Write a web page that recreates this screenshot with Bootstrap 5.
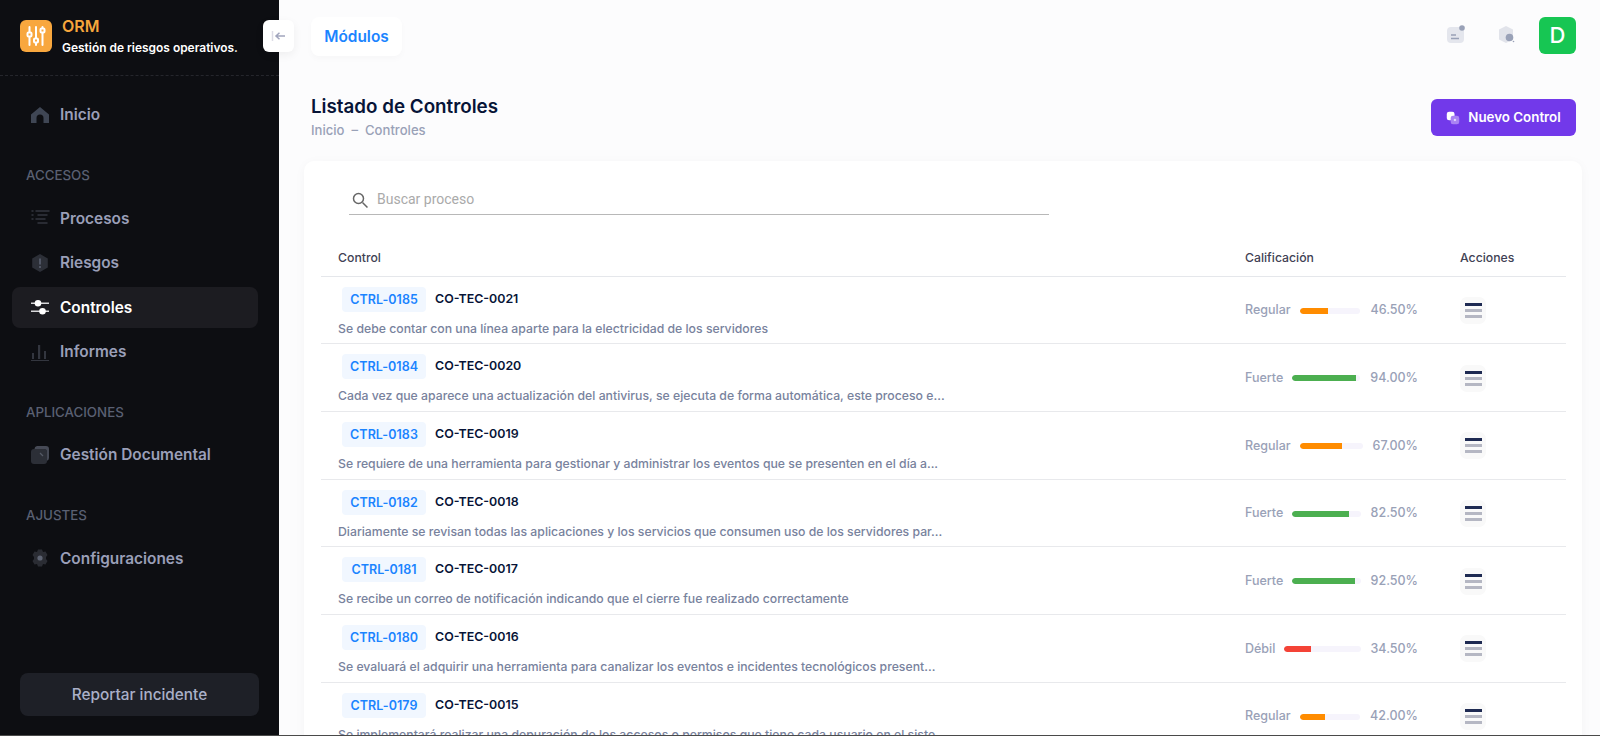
<!DOCTYPE html>
<html lang="es">
<head>
<meta charset="utf-8">
<title>Listado de Controles</title>
<link href="https://cdn.jsdelivr.net/npm/bootstrap@5.3.0/dist/css/bootstrap.min.css" rel="stylesheet">
<style>
html,body{height:736px;overflow:hidden}
body{font-family:Inter,"Liberation Sans",sans-serif;background:#fcfcfd;color:#071437}
.shell{height:735px;overflow:hidden}
.frame-line{height:1px;background:#4a4a4a}
.side{width:279px;flex:none;background:#0d0e12;height:735px}
.brand{height:76px;border-bottom:1px dashed #25262c;padding:20px 20px 0;gap:10px}
.logo-box{width:32px;height:32px;border-radius:6px;background:#f8a73e;flex:none}
.brand-name{font-size:16px;font-weight:600;color:#f6a63c;line-height:18px;margin-top:-3px}
.brand-sub{font-size:11.95px;font-weight:600;color:#fff;line-height:16px;margin-top:5px;white-space:nowrap}
.side-nav{padding:0 21px 0 12px;flex:1}
.nav-entry{height:41px;display:flex;align-items:center;gap:10px;padding-left:18px;font-size:15.4px;font-weight:600;color:#9a9fb8;border-radius:8px;margin-bottom:3.4px;text-decoration:none}
.nav-entry svg{width:20px;height:20px;flex:none}
.nav-entry.on{background:#1c1c21;color:#fff}
.nav-head{font-size:13.3px;font-weight:500;color:#5a6072;padding-left:14px;line-height:16px}
.first-entry{margin-top:18px}
.gap-accesos{margin-top:29px}
.gap-apps{margin-top:28.5px}
.gap-ajustes{margin-top:28.5px}
.after-head{margin-top:14.5px}
.report-wrap{padding:0 20px 19px}
.report-btn{width:239px;height:43px;background:#1e2027;color:#aab0c8;font-size:15.35px;font-weight:500;border:0;border-radius:8px}
.collapse-btn{position:absolute;left:263px;top:20px;width:31px;height:32px;background:#fff;border-radius:6px;box-shadow:0 3px 10px rgba(0,0,0,.06);z-index:5}
.main-col{min-width:0}
.topbar{height:70px;padding:17px 24px 0 32px}
.mod-box{width:91px;height:39px;background:#fff;border-radius:8px;box-shadow:0 3px 6px rgba(0,0,0,.025);color:#1b84ff;font-size:15.4px;font-weight:600}
.top-ico{width:20px;height:20px;margin-top:7px}
.ico-a{margin-right:32px}
.ico-b{margin-right:22px}
.avatar{width:37px;height:37px;border-radius:6px;background:#17c653;color:#fff;font-size:22px;font-weight:500}
.head-row{padding:25px 24px 0 32px;height:91px}
.page-title{font-size:18.8px;font-weight:600;color:#071437;line-height:24px;margin:0}
.crumbs{font-size:13.1px;font-weight:500;color:#99a1b7;line-height:16px;margin-top:3px}
.new-btn{width:145px;height:37px;background:#7239ea;color:#fff;font-size:13.35px;font-weight:600;border:0;border-radius:6px;margin-top:4px}
.panel{margin:0 18px 0 25px;background:#fff;border-radius:10px;box-shadow:0 2px 12px rgba(0,0,0,.035);padding:23px 16px 0 17px;height:640px}
.search-box{width:700px;margin-left:28px;height:31px;border-bottom:1px solid #b8b8b8;padding:0 2px 0;align-items:flex-start}
.search-box input{border:0;outline:0;background:none;font-size:14px;line-height:18px;height:18px;padding:0;flex:1;font-family:Roboto,sans-serif;color:#555;margin-top:6px}
.search-box input::placeholder{color:#aaa}
.search-box svg{margin-top:7px}
.ctable{width:1245px;table-layout:fixed;border-collapse:collapse;margin-top:26px}
.ctable th{font-size:12.25px;font-weight:500;color:#3f4254;padding:0 0 0 17px;height:35px;border-bottom:1px solid #e5e7eb;vertical-align:middle}
.ctable td{padding:0 0 0 17px;height:67.7px;border-bottom:1px solid #e8e9ec;vertical-align:top}
.code-chip{display:inline-block;height:25px;line-height:25px;width:84px;text-align:center;margin-left:4px;margin-top:10px;border-radius:4px;background:#f1f7ff;color:#1b84ff;font-size:12.5px;font-weight:600;letter-spacing:.05px}
.code-ref{font-size:12.4px;font-weight:600;color:#071437;margin-left:9px;vertical-align:1px}
.ctl-desc{font-size:12.25px;font-weight:500;color:#78829d;line-height:16px;margin-top:9px;white-space:nowrap;overflow:hidden}
.score{width:173px;height:66px;padding-top:2px;font-size:12.5px;color:#99a1b7;font-weight:500}
.score-bar{flex:1;height:6px;background:#f6f4fc;border-radius:3px;margin:0 10px 0 9px;overflow:hidden}
.score-bar span{display:block;height:100%;border-radius:3px 0 0 3px}
.act-wrap{height:66px;padding-top:2px}
.act-btn{width:26px;height:27px;border-radius:7px;background:#f9f9f9}
.act-btn i{display:block;width:17px;height:3px;margin-bottom:3px}
.act-btn i:last-child{margin-bottom:0}
</style>
</head>
<body>
<div class="shell d-flex">
  <aside class="side d-flex flex-column">
    <div class="brand d-flex">
      <div class="logo-box d-flex align-items-center justify-content-center">
        <svg width="24" height="24" viewBox="0 0 24 24" fill="none" stroke="#fff" stroke-width="2" stroke-linecap="round">
          <path d="M5.5 3v5M5.5 13v8M12 3v11M12 19v2M18.500 3v1M18.500 9v12"/>
          <rect x="3.500" y="8.500" width="4" height="4" rx="1"/><rect x="10" y="14.500" width="4" height="4" rx="1"/><rect x="16.500" y="4.500" width="4" height="4" rx="1"/>
        </svg>
      </div>
      <div>
        <div class="brand-name">ORM</div>
        <div class="brand-sub">Gestión de riesgos operativos.</div>
      </div>
    </div>
    <div class="side-nav d-flex flex-column">
      <a class="nav-entry first-entry" href="#"><svg viewBox="0 0 20 20"><path fill="#3f4654" d="M1 9.500 10 2l9 7.500V18h-5.500v-5a3.500 3.500 0 0 0-7 0v5H1z"/></svg>Inicio</a>
      <div class="nav-head gap-accesos">ACCESOS</div>
      <a class="nav-entry after-head" href="#"><svg viewBox="0 0 20 20" fill="none" stroke="#33363f" stroke-width="1.500" stroke-linecap="round"><path d="M6 3h13M8 7h9M6 11h9M8 15h9M2 3h1M2 7h1M2 11h1"/></svg>Procesos</a>
      <a class="nav-entry" href="#"><svg viewBox="0 0 20 20"><path fill="#2c2f37" d="M10 1l7.800 4.500v9L10 19l-7.800-4.500v-9z"/><path fill="#5a6070" d="M9.200 5.500h1.600v6H9.200zM9.200 13h1.600v2H9.200z"/></svg>Riesgos</a>
      <a class="nav-entry on" href="#"><svg viewBox="0 0 20 20" fill="#fff"><path d="M1 5.500h18v1.600H1zM1 13.500h18v1.600H1z" fill="#d8d8da"/><circle cx="8" cy="6.300" r="3.300"/><circle cx="12.500" cy="14.300" r="3.300"/></svg>Controles</a>
      <a class="nav-entry" href="#"><svg viewBox="0 0 20 20" fill="#33363f"><rect x="2" y="11" width="2" height="6"/><rect x="8" y="3" width="2.200" height="14"/><rect x="14" y="9" width="2" height="8"/><rect x="1" y="18" width="18" height="1"/></svg>Informes</a>
      <div class="nav-head gap-apps">APLICACIONES</div>
      <a class="nav-entry after-head" href="#"><svg viewBox="0 0 20 20"><path fill="#2c2f37" d="M4 4h10a3 3 0 0 1 3 3v9a3 3 0 0 1-3 3H4a3 3 0 0 1-3-3V7a3 3 0 0 1 3-3z"/><path fill="#464a56" d="M7 1h9a3 3 0 0 1 3 3v9a3 3 0 0 1-2 2.800V7a3 3 0 0 0-3-3H4.500A3 3 0 0 1 7 1z"/><path d="M10 8l3 3" stroke="#555a66" stroke-width="1.300"/></svg>Gestión Documental</a>
      <div class="nav-head gap-ajustes">AJUSTES</div>
      <a class="nav-entry after-head" href="#"><svg viewBox="0 0 20 20"><path fill="#2a2c33" d="M8 1.500h4l1 2.500 2.500-.5 2 3.500L16 9v2l1.500 2-2 3.500L13 16l-1 2.500H8L7 16l-2.500.5-2-3.500L4 11V9L2.500 7l2-3.500L7 4z"/><circle cx="10" cy="10" r="2.600" fill="#5e6473"/></svg>Configuraciones</a>
    </div>
    <div class="report-wrap"><button class="report-btn btn" type="button">Reportar incidente</button></div>
  </aside>
  <div class="collapse-btn d-flex align-items-center justify-content-center">
    <svg width="16" height="12" viewBox="0 0 16 12" fill="none" stroke="#a1a5bd"><path d="M1.500 1v10" stroke="#dcdce6" stroke-width="1.500"/><path d="M14 6H5M8.500 2.800 5 6l3.500 3.200" stroke-width="1.500"/></svg>
  </div>
  <div class="main-col flex-grow-1">
    <div class="topbar d-flex justify-content-between">
      <div class="mod-box d-flex align-items-center justify-content-center">Módulos</div>
      <div class="d-flex align-items-start">
        <div class="top-ico ico-a"><svg class="d-block" width="20" height="20" viewBox="0 0 20 20"><rect x="2" y="3" width="17" height="16" rx="4" fill="#e4e6ed"/><path d="M6 11h5M6 14.500h8" stroke="#99a1b7" stroke-width="1.300"/><circle cx="17" cy="4" r="2.800" fill="#99a1b7"/></svg></div>
        <div class="top-ico ico-b"><svg class="d-block" width="20" height="20" viewBox="0 0 20 20"><path fill="#e1e3ea" d="M9 2l7 3.500v10L9 19l-7-3.500v-10z"/><circle cx="12.500" cy="13.500" r="3.800" fill="#99a1b7"/><circle cx="16.500" cy="17.500" r=".8" fill="#99a1b7"/></svg></div>
        <div class="avatar d-flex align-items-center justify-content-center">D</div>
      </div>
    </div>
    <div class="head-row d-flex justify-content-between align-items-start">
      <div>
        <h1 class="page-title">Listado de Controles</h1>
        <div class="crumbs">Inicio&nbsp; –&nbsp; Controles</div>
      </div>
      <button class="new-btn btn d-flex align-items-center justify-content-center gap-2 p-0" type="button">
        <svg width="14" height="14" viewBox="0 0 18 18"><rect x="1" y="1" width="10" height="11" rx="3" fill="#fff"/><rect x="6" y="6" width="11" height="11" rx="3" fill="#a983f3"/><path d="M10 11.500h3M11.500 10v3" stroke="#fff"/></svg>
        Nuevo Control
      </button>
    </div>
    <div class="panel">
      <div class="search-box d-flex gap-2">
        <svg width="18" height="18" viewBox="0 0 18 18" fill="none" stroke="#666" stroke-width="1.500"><circle cx="7.500" cy="7.500" r="5"/><path d="m11.500 11.500 5 5"/></svg>
        <input type="text" placeholder="Buscar proceso">
      </div>
      <table class="ctable">
        <colgroup><col style="width:907px"><col style="width:215px"><col style="width:123px"></colgroup>
        <thead><tr><th>Control</th><th>Calificación</th><th>Acciones</th></tr></thead>
        <tbody>
          <tr><td><span class="code-chip">CTRL-0185</span><span class="code-ref">CO-TEC-0021</span><div class="ctl-desc">Se debe contar con una línea aparte para la electricidad de los servidores</div></td><td><div class="score d-flex align-items-center"><span>Regular</span><div class="score-bar"><span style="width:46.5%;background:#ff8c00"></span></div><span>46.50%</span></div></td><td><div class="act-wrap d-flex align-items-center"><div class="act-btn d-flex flex-column align-items-center justify-content-center"><i style="background:#1e2a52"></i><i style="background:#b5b7c3"></i><i style="background:#b5b7c3"></i></div></div></td></tr>
          <tr><td><span class="code-chip">CTRL-0184</span><span class="code-ref">CO-TEC-0020</span><div class="ctl-desc">Cada vez que aparece una actualización del antivirus, se ejecuta de forma automática, este proceso e...</div></td><td><div class="score d-flex align-items-center"><span>Fuerte</span><div class="score-bar"><span style="width:94%;background:#4caf50"></span></div><span>94.00%</span></div></td><td><div class="act-wrap d-flex align-items-center"><div class="act-btn d-flex flex-column align-items-center justify-content-center"><i style="background:#1e2a52"></i><i style="background:#b5b7c3"></i><i style="background:#b5b7c3"></i></div></div></td></tr>
          <tr><td><span class="code-chip">CTRL-0183</span><span class="code-ref">CO-TEC-0019</span><div class="ctl-desc">Se requiere de una herramienta para gestionar y administrar los eventos que se presenten en el día a...</div></td><td><div class="score d-flex align-items-center"><span>Regular</span><div class="score-bar"><span style="width:67%;background:#ff8c00"></span></div><span>67.00%</span></div></td><td><div class="act-wrap d-flex align-items-center"><div class="act-btn d-flex flex-column align-items-center justify-content-center"><i style="background:#1e2a52"></i><i style="background:#b5b7c3"></i><i style="background:#b5b7c3"></i></div></div></td></tr>
          <tr><td><span class="code-chip">CTRL-0182</span><span class="code-ref">CO-TEC-0018</span><div class="ctl-desc">Diariamente se revisan todas las aplicaciones y los servicios que consumen uso de los servidores par...</div></td><td><div class="score d-flex align-items-center"><span>Fuerte</span><div class="score-bar"><span style="width:82.5%;background:#4caf50"></span></div><span>82.50%</span></div></td><td><div class="act-wrap d-flex align-items-center"><div class="act-btn d-flex flex-column align-items-center justify-content-center"><i style="background:#1e2a52"></i><i style="background:#b5b7c3"></i><i style="background:#b5b7c3"></i></div></div></td></tr>
          <tr><td><span class="code-chip">CTRL-0181</span><span class="code-ref">CO-TEC-0017</span><div class="ctl-desc">Se recibe un correo de notificación indicando que el cierre fue realizado correctamente</div></td><td><div class="score d-flex align-items-center"><span>Fuerte</span><div class="score-bar"><span style="width:92.5%;background:#4caf50"></span></div><span>92.50%</span></div></td><td><div class="act-wrap d-flex align-items-center"><div class="act-btn d-flex flex-column align-items-center justify-content-center"><i style="background:#1e2a52"></i><i style="background:#b5b7c3"></i><i style="background:#b5b7c3"></i></div></div></td></tr>
          <tr><td><span class="code-chip">CTRL-0180</span><span class="code-ref">CO-TEC-0016</span><div class="ctl-desc">Se evaluará el adquirir una herramienta para canalizar los eventos e incidentes tecnológicos present...</div></td><td><div class="score d-flex align-items-center"><span>Débil</span><div class="score-bar"><span style="width:34.5%;background:#f44336"></span></div><span>34.50%</span></div></td><td><div class="act-wrap d-flex align-items-center"><div class="act-btn d-flex flex-column align-items-center justify-content-center"><i style="background:#1e2a52"></i><i style="background:#b5b7c3"></i><i style="background:#b5b7c3"></i></div></div></td></tr>
          <tr><td><span class="code-chip">CTRL-0179</span><span class="code-ref">CO-TEC-0015</span><div class="ctl-desc">Se implementará realizar una depuración de los accesos o permisos que tiene cada usuario en el siste...</div></td><td><div class="score d-flex align-items-center"><span>Regular</span><div class="score-bar"><span style="width:42%;background:#ff8c00"></span></div><span>42.00%</span></div></td><td><div class="act-wrap d-flex align-items-center"><div class="act-btn d-flex flex-column align-items-center justify-content-center"><i style="background:#1e2a52"></i><i style="background:#b5b7c3"></i><i style="background:#b5b7c3"></i></div></div></td></tr>
        </tbody>
      </table>
    </div>
  </div>
</div>
<div class="frame-line"></div>
<script src="https://cdn.jsdelivr.net/npm/bootstrap@5.3.0/dist/js/bootstrap.bundle.min.js"></script>
</body>
</html>
